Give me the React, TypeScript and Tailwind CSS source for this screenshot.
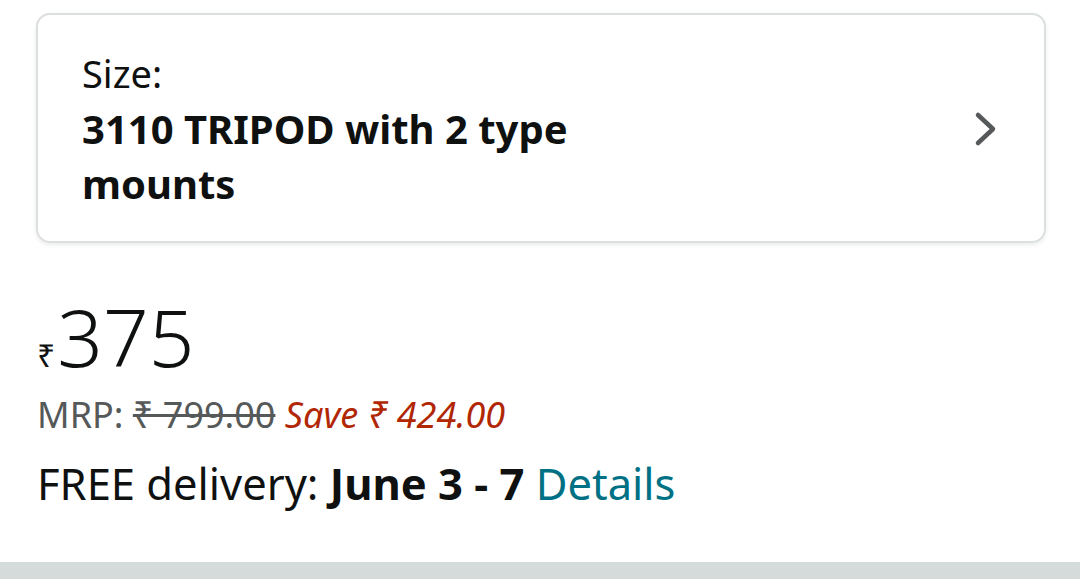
import React from "react";

export default function App() {
  return (
    <div className="w-[1080px] h-[579px] bg-white flex flex-col overflow-hidden text-[#0f1111]" style={{ fontFamily: '"Noto Sans", "Open Sans", sans-serif' }}>
      <div className="ml-[36px] mr-[34px] mt-[13px] h-[230px] rounded-[14px] border-2 border-[#dcdfdf] shadow-[0_2px_4px_rgba(0,0,0,0.08)] flex items-center pl-[44px] pr-[46px]">
        <div className="flex-1 flex flex-col">
          <div className="text-[38px] leading-[55px]">Size:</div>
          <div className="text-[40px] leading-[55px] font-bold w-[520px]">3110 TRIPOD with 2 type mounts</div>
        </div>
        <svg width="24" height="36" viewBox="0 0 24 36" className="mt-[2px]">
          <path d="M4 4 L19 18 L4 32" fill="none" stroke="#565959" strokeWidth="4.5" strokeLinecap="round" strokeLinejoin="round" />
        </svg>
      </div>
      <div className="pl-[37px] mt-[58px] flex flex-col">
        <div className="flex items-start h-[70px]">
          <span className="text-[32px] mt-[38px] leading-none">₹</span>
          <span className="text-[80px] leading-[70px] font-light ml-[2px]">375</span>
        </div>
        <div className="text-[36px] leading-[44px] mt-[22px] text-[#565959]">
          MRP: <span className="line-through">₹ 799.00</span> <span className="italic text-[#b12704]">Save ₹ 424.00</span>
        </div>
        <div className="text-[43.5px] leading-[56px] mt-[18px]">
          FREE delivery: <span className="font-bold">June 3 - 7</span> <span className="text-[#007185]">Details</span>
        </div>
      </div>
      <div className="mt-auto h-[17px] bg-[#d5dbdb]" />
    </div>
  );
}
